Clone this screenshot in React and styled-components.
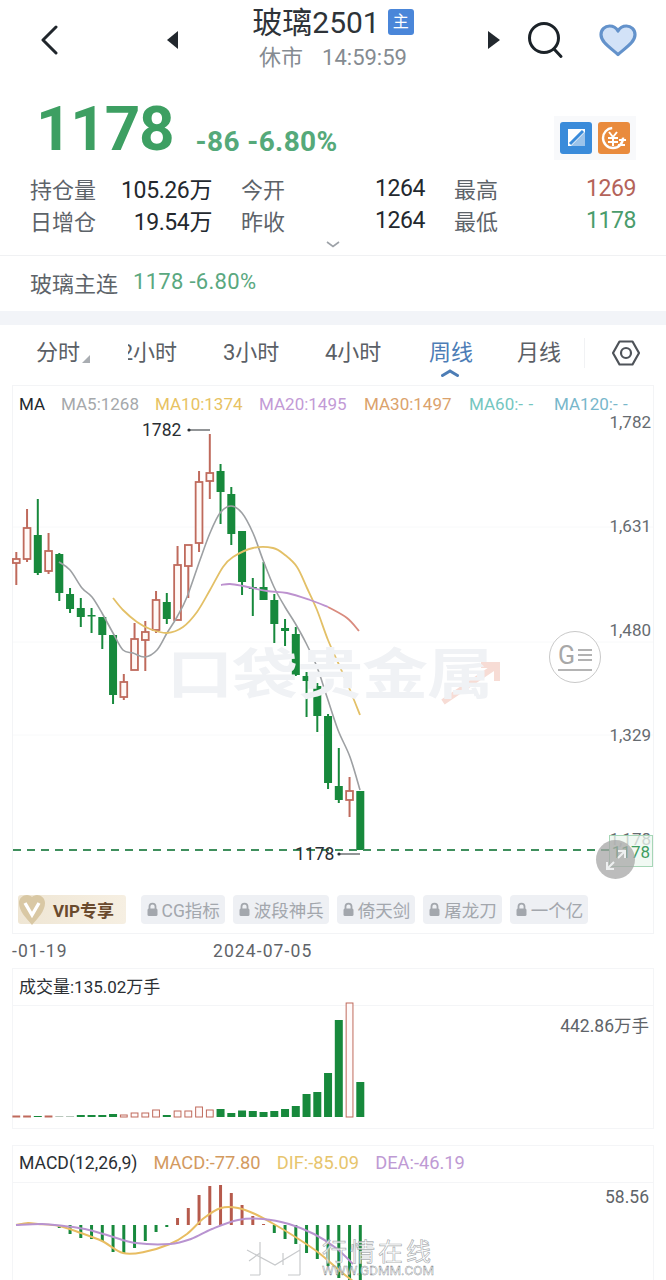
import styled, { createGlobalStyle } from "styled-components";

const GlobalStyle = createGlobalStyle`
  html, body { margin: 0; padding: 0; background: #fff; }
  body { font-family: Roboto, "Noto Sans CJK SC", sans-serif; }
  * { box-sizing: border-box; }
`;

const GREEN = "#17893c";
const RED = "#bf6a5c";

// [high, bodyTop, bodyBottom, low, up], all in page pixels
const candles = [
  [552, 559, 563, 585, 1], [509, 528, 559, 562, 1], [499, 535, 573, 575, 0], [533, 551, 571, 574, 1],
  [553, 554, 593, 601, 0], [588, 594, 609, 613, 0], [598, 608, 617, 627, 0], [608, 615, 616, 633, 0],
  [617, 617, 635, 649, 0], [635, 635, 695, 704, 0], [674, 682, 697, 700, 1], [623, 639, 670, 670, 1],
  [621, 632, 640, 671, 1], [591, 600, 630, 633, 1], [593, 602, 619, 624, 0], [546, 565, 620, 620, 1],
  [546, 545, 566, 598, 1], [471, 482, 543, 552, 1], [434, 473, 481, 499, 1], [464, 471, 492, 524, 0],
  [487, 494, 534, 545, 0], [531, 531, 582, 595, 0], [578, 587, 589, 616, 0], [562, 587, 600, 600, 0],
  [594, 600, 624, 643, 0], [619, 628, 631, 646, 0], [627, 634, 675, 676, 0], [672, 676, 681, 717, 0],
  [683, 686, 716, 732, 0], [714, 716, 783, 789, 0], [748, 786, 800, 803, 0], [777, 791, 800, 817, 1],
  [791, 791, 850, 850, 0],
];

const candleX = (i) => 16.3 + 10.75 * i;

const ma5 = [
  [59, 562], [70, 570], [82, 588], [92, 597], [102, 613], [113, 633], [123, 650], [133, 653], [145, 657],
  [157, 650], [167, 633], [177, 617], [187, 597], [200, 560], [210, 533], [220, 513], [231, 506], [242, 513],
  [253, 533], [263, 560], [274, 587], [285, 607], [295, 623], [306, 643], [317, 667], [327, 697], [338, 730],
  [350, 757], [360, 790],
];
const ma10 = [
  [113, 598], [123, 610], [137, 622], [150, 629], [167, 633], [183, 627], [197, 612], [210, 590], [223, 567],
  [233, 557], [253, 548], [273, 548], [285, 555], [297, 567], [307, 588], [317, 610], [328, 640], [340, 667],
  [350, 690], [360, 715],
];
const ma20 = [[221, 585], [230, 584], [243, 586], [267, 591], [287, 593], [310, 600], [328, 607]];
const ma30 = [[328, 607], [347, 618], [359, 631]];

const volumes = [
  [1, 1], [1, 1], [1, 0], [1, 1], [1, 2], [1, 2], [2, 0], [2, 0], [2, 0], [3, 0], [2, 1],
  [4, 1], [4, 1], [7, 1], [2, 0], [6, 1], [6, 1], [10, 1], [7, 1], [8, 0], [4, 0], [6.5, 0],
  [6, 0], [5, 0], [6, 0], [8, 0], [11, 0], [23, 0], [25, 0], [44, 0], [97, 0], [114, 1], [35, 0],
];

// histogram ends as page y, measured from the zero line at 1224
const macdBars = [
  null, null, null, null, 1227, 1233, 1237, 1238, 1240, 1251, 1252, 1247, 1240, 1231, 1226,
  1217, 1207, 1194, 1185, 1184, 1192, 1204, 1215, 1223, 1232, 1238, 1243, 1252, 1258, 1265, 1277, 1280, 1280,
];
const dif = [
  [16, 1224], [28, 1222], [38, 1223], [59, 1225], [81, 1232], [102, 1240], [123, 1252], [144, 1251], [170, 1243],
  [187, 1233], [204, 1217], [221, 1207], [238, 1207], [255, 1213], [272, 1222], [297, 1237], [319, 1252], [340, 1270], [353, 1280],
];
const dea = [
  [16, 1224], [42, 1223], [64, 1225], [85, 1228], [110, 1235], [136, 1242], [170, 1243], [191, 1238], [212, 1228],
  [238, 1219], [263, 1218], [289, 1223], [314, 1233], [336, 1247], [353, 1263],
];

// catmull-rom through the measured points, so the averages stay round
function smooth(points) {
  let d = `M${points[0][0]} ${points[0][1]}`;
  for (let i = 0; i < points.length - 1; i++) {
    const p0 = points[i - 1] || points[i];
    const p1 = points[i];
    const p2 = points[i + 1];
    const p3 = points[i + 2] || p2;
    const c1 = [p1[0] + (p2[0] - p0[0]) / 6, p1[1] + (p2[1] - p0[1]) / 6];
    const c2 = [p2[0] - (p3[0] - p1[0]) / 6, p2[1] - (p3[1] - p1[1]) / 6];
    d += ` C${c1[0]} ${c1[1]} ${c2[0]} ${c2[1]} ${p2[0]} ${p2[1]}`;
  }
  return d;
}

const Page = styled.div`
  position: relative;
  width: 666px;
  height: 1280px;
  overflow: hidden;
  background: #fff;
`;

const Header = styled.header`
  display: grid;
  grid-template-columns: 167px 11px 310px 12px 27px 72px 1fr;
  height: 90px;
  align-items: center;
`;

const BackCell = styled.div`
  padding: 0 0 10px 40px;
  display: flex;
`;

const Arrow = styled.svg`
  display: block;
  margin-bottom: 10px;
`;

const TitleBlock = styled.div`
  display: flex;
  flex-direction: column;
  align-items: center;
  margin-bottom: 18px;
`;

const TitleRow = styled.div`
  display: flex;
  align-items: flex-start;
  gap: 8px;
  height: 43px;
  padding-top: 4px;
`;

const Title = styled.div`
  font-size: 30px;
  line-height: 36px;
  color: #2e3338;
`;

const Badge = styled.span`
  width: 26px;
  height: 26px;
  margin-top: 4px;
  border-radius: 3px;
  background: #4a86d9;
  color: #fff;
  font-size: 16px;
  line-height: 26px;
  text-align: center;
`;

const Status = styled.div`
  display: flex;
  gap: 19px;
  font-size: 22px;
  line-height: 28px;
  color: #858b91;
`;

const IconCell = styled.div`
  display: flex;
  padding-bottom: 10px;
`;

const Quote = styled.section`
  display: flex;
  align-items: flex-end;
  height: 82px;
  padding: 0 30px 15px 36px;
`;

const BigPrice = styled.div`
  font-size: 62px;
  font-weight: 700;
  line-height: 56px;
  color: #3d9f62;
  letter-spacing: -1.2px;
`;

const Change = styled.div`
  margin-left: 22px;
  font-size: 28px;
  font-weight: 700;
  line-height: 30px;
  color: #55a97a;
  letter-spacing: 0.4px;
`;

const Tools = styled.div`
  margin-left: auto;
  display: flex;
  gap: 6px;
  padding: 6px 6px;
  margin-bottom: -3px;
  background: #f8f9fb;
`;

const Stats = styled.section`
  display: grid;
  grid-template-columns: 182px 184px 182px;
  column-gap: 29px;
  grid-auto-rows: 32px;
  padding: 0 30px;
`;

const Stat = styled.div`
  display: flex;
  justify-content: space-between;
  align-items: center;
`;

const StatLabel = styled.span`
  font-size: 22px;
  color: #5d6369;
`;

const StatValue = styled.span`
  font-size: 23px;
  letter-spacing: -0.4px;
  color: ${(p) => p.$color || "#23282e"};
`;

const Fold = styled.div`
  display: flex;
  justify-content: center;
  height: 20px;
  padding-top: 5px;
  border-bottom: 1px solid #f0f1f3;
`;

const SubRow = styled.div`
  display: flex;
  align-items: center;
  gap: 15px;
  height: 55px;
  padding: 0 0 4px 30px;
  font-size: 22px;
  color: #5d6369;
`;

const SubValue = styled.span`
  color: #5aa880;
  letter-spacing: 0.3px;
`;

const Band = styled.div`
  height: 14px;
  background: #f2f4f8;
`;

const Tabs = styled.nav`
  display: grid;
  grid-template-columns: 92px 95px 102px 104px 88px 67px 1fr;
  height: 60px;
  padding: 13px 0 0 36px;
`;

const Tab = styled.div`
  position: relative;
  display: flex;
  height: 30px;
  font-size: 22px;
  line-height: 30px;
  color: ${(p) => (p.$active ? "#4d7db6" : "#5b6066")};
`;

const ClippedDigit = styled.span`
  display: inline-block;
  width: 5px;
  overflow: hidden;
  direction: rtl;
`;

const TabMark = styled.svg`
  position: absolute;
  left: ${(p) => p.$left}px;
  top: ${(p) => p.$top}px;
`;

const SettingsCell = styled.div`
  display: flex;
  justify-content: flex-start;
  padding-left: 27px;
  border-left: 1px solid #f1f2f4;
  height: 30px;
`;

const ChartPanel = styled.section`
  position: relative;
  margin: 0 12px;
  height: 549px;
  border: 1px solid #f3f4f6;
`;

const Legend = styled.div`
  display: flex;
  align-items: center;
  height: 34px;
  padding: 2px 0 0 6px;
  font-size: 17px;
  white-space: nowrap;
`;

const LegendItem = styled.span`
  width: ${(p) => p.$width}px;
  color: ${(p) => p.$color};
`;

const Dashes = styled.span`
  letter-spacing: 5.5px;
`;

const ChartSvg = styled.svg`
  display: block;
  overflow: visible;
`;

const PriceScale = styled.div`
  position: absolute;
  top: 26px;
  right: 2px;
  display: flex;
  flex-direction: column;
  align-items: flex-end;
  gap: 84.2px;
  font-size: 17px;
  line-height: 20px;
  color: #666b70;
`;

const Watermark = styled.div`
  position: absolute;
  top: 252px;
  left: 154px;
  font-size: 66px;
  line-height: 76px;
  font-weight: 700;
  letter-spacing: -1px;
  white-space: nowrap;
  color: #f0f2f5;
  transform: scaleY(0.82);
`;

const GoldButton = styled.div`
  position: absolute;
  top: 245px;
  left: 536px;
  width: 52px;
  height: 52px;
  border: 1.5px solid #c9c9c9;
  border-radius: 50%;
  background: rgba(255, 255, 255, 0.85);
  display: flex;
  align-items: center;
  justify-content: center;
`;

const GoldMark = styled.div`
  display: flex;
  align-items: center;
  gap: 2px;
  height: 27px;
  border-bottom: 2px solid #b4b4b4;
  font-size: 25px;
  line-height: 24px;
  color: #a8a8a8;
`;

const LastTag = styled.div`
  position: absolute;
  top: 449px;
  right: 0;
  width: 44px;
  height: 32px;
  padding: 6px 2px 0 0;
  border: 1px solid #a6d6b6;
  background: rgba(236, 247, 239, 0.75);
  text-align: right;
  font-size: 17px;
  line-height: 20px;
  color: #3e9d60;
`;

const ZoomButton = styled.div`
  position: absolute;
  top: 454px;
  left: 583px;
  width: 39px;
  height: 39px;
  border-radius: 50%;
  background: rgba(165, 165, 165, 0.75);
  display: flex;
  align-items: center;
  justify-content: center;
`;

const IndicatorBar = styled.div`
  display: flex;
  align-items: center;
  gap: 8px;
  height: 43px;
  padding: 0 0 4px 5px;
`;

const VipChip = styled.div`
  display: flex;
  align-items: center;
  gap: 7px;
  width: 108px;
  height: 29px;
  margin-right: 6.5px;
  border-radius: 3px;
  background: linear-gradient(90deg, #efe6d4, #f6efe2);
  font-size: 17px;
  font-weight: 700;
  color: #6a4a2d;
`;

const LockChip = styled.div`
  display: flex;
  align-items: center;
  gap: 3px;
  height: 29px;
  padding: 0 5px;
  border-radius: 4px;
  background: #eef0f4;
  font-size: 17.5px;
  white-space: nowrap;
  color: #a3a7ad;
`;

const DateAxis = styled.div`
  display: grid;
  grid-template-columns: 201px 1fr;
  height: 34px;
  padding: 6px 0 0 12px;
  font-size: 17.5px;
  letter-spacing: 1.1px;
  line-height: 22px;
  color: #5f6469;
`;

const IndicatorPanel = styled.section`
  position: relative;
  margin: 0 12px ${(p) => p.$gap || 0}px;
  border: 1px solid #f4f5f7;
  border-bottom-width: ${(p) => (p.$open ? 0 : 1)}px;
`;

const PanelHead = styled.div`
  display: flex;
  align-items: center;
  gap: 16px;
  height: 37px;
  padding: 0 0 3px 6px;
  border-bottom: 1px solid #f4f5f7;
  font-size: 17px;
  white-space: nowrap;
  color: #2b2f34;
`;

const MacdName = styled.span`
  font-size: 17.6px;
`;

const HeadValue = styled.span`
  font-size: 18.3px;
  color: ${(p) => p.$color};
`;

const MaxLabel = styled.div`
  position: absolute;
  right: 4px;
  top: ${(p) => p.$top}px;
  font-size: 17.5px;
  line-height: 20px;
  color: #5f6469;
`;

const SiteMark = styled.div`
  position: absolute;
  left: 236px;
  top: 1241px;
  display: flex;
  pointer-events: none;
`;

const SiteText = styled.div`
  margin-left: 6px;
  display: flex;
  flex-direction: column;
  color: rgba(255, 255, 255, 0.75);
`;

const SiteName = styled.div`
  height: 23px;
  font-size: 25px;
  line-height: 23px;
  letter-spacing: 3px;
  -webkit-text-stroke: 0.7px rgba(150, 155, 160, 0.8);
`;

const SiteUrl = styled.div`
  font-size: 13.3px;
  line-height: 14px;
  white-space: nowrap;
  -webkit-text-stroke: 0.5px rgba(130, 135, 140, 0.9);
`;

function Candle({ data, index }) {
  const [high, top, bottom, low, up] = data;
  const x = candleX(index);
  const color = up ? RED : GREEN;
  return (
    <g>
      <line x1={x} x2={x} y1={high} y2={low} stroke={color} strokeWidth="2" />
      {up ? (
        <rect x={x - 3.4} y={top} width="6.8" height={Math.max(bottom - top, 1)} fill="#fff9f7" stroke={color} strokeWidth="1.8" />
      ) : (
        <rect x={x - 4} y={top} width="8" height={Math.max(bottom - top, 1.5)} fill={color} />
      )}
    </g>
  );
}

function LockIcon() {
  return (
    <svg width="13" height="15" viewBox="0 0 13 15">
      <path d="M3.5 7V4.6a3 3 0 0 1 6 0V7" fill="none" stroke="#a3a7ad" strokeWidth="1.8" />
      <rect x="1.5" y="6.5" width="10" height="7.5" rx="1.5" fill="#a3a7ad" />
    </svg>
  );
}

const locked = ["CG指标", "波段神兵", "倚天剑", "屠龙刀", "一个亿"];

export default function App() {
  return (
    <Page>
      <GlobalStyle />
      <Header>
        <BackCell>
          <svg width="18" height="30" viewBox="0 0 18 30">
            <path d="M16 2 L3 15 L16 28" fill="none" stroke="#20262c" strokeWidth="3" strokeLinecap="round" strokeLinejoin="round" />
          </svg>
        </BackCell>
        <Arrow width="11" height="18" viewBox="0 0 11 18">
          <path d="M11 0V18L0 9Z" fill="#22282e" />
        </Arrow>
        <TitleBlock>
          <TitleRow>
            <Title>玻璃2501</Title>
            <Badge>主</Badge>
          </TitleRow>
          <Status>
            <span>休市</span>
            <span>14:59:59</span>
          </Status>
        </TitleBlock>
        <Arrow width="12" height="18" viewBox="0 0 12 18">
          <path d="M0 0V18L12 9Z" fill="#22282e" />
        </Arrow>
        <span />
        <IconCell>
          <svg width="37" height="38" viewBox="0 0 37 38">
            <circle cx="17" cy="17" r="14.5" fill="none" stroke="#1b2228" strokeWidth="3" />
            <path d="M27 28 L34 35.5" stroke="#1b2228" strokeWidth="3" strokeLinecap="round" />
          </svg>
        </IconCell>
        <IconCell>
          <svg width="38" height="33" viewBox="0 0 38 33">
            <path
              d="M19 30.5 C11 23.5 2 18 2 10.8 C2 5.6 6 2 10.6 2 C14 2 17.2 3.8 19 7 C20.8 3.8 24 2 27.4 2 C32 2 36 5.6 36 10.8 C36 18 27 23.5 19 30.5Z"
              fill="#d2e2f7"
              stroke="#6392cb"
              strokeWidth="3.2"
              strokeLinejoin="round"
            />
          </svg>
        </IconCell>
      </Header>

      <Quote>
        <BigPrice>1178</BigPrice>
        <Change>-86 -6.80%</Change>
        <Tools>
          <svg width="32" height="32" viewBox="0 0 32 32">
            <rect width="32" height="32" rx="3" fill="#3a8bda" />
            <path d="M8 7H25V24H8Z" fill="#fff" />
            <path d="M11 24 L25 10 V24Z" fill="#9cc3ea" />
            <path d="M10 22 L23 9" stroke="#3a8bda" strokeWidth="3" />
          </svg>
          <svg width="32" height="32" viewBox="0 0 32 32">
            <rect width="32" height="32" rx="3" fill="#e98b3d" />
            <circle cx="15" cy="16" r="10" fill="none" stroke="#fff" strokeWidth="2.4" strokeDasharray="46 16" />
            <path d="M11 10 L15 15 L19 10 M10 16H20 M10 20H20 M15 15V24" fill="none" stroke="#fff" strokeWidth="2" />
            <path d="M21 18H28 M20 23H27" stroke="#fff" strokeWidth="2" />
          </svg>
        </Tools>
      </Quote>

      <Stats>
        <Stat>
          <StatLabel>持仓量</StatLabel>
          <StatValue>105.26万</StatValue>
        </Stat>
        <Stat>
          <StatLabel>今开</StatLabel>
          <StatValue>1264</StatValue>
        </Stat>
        <Stat>
          <StatLabel>最高</StatLabel>
          <StatValue $color="#b4635a">1269</StatValue>
        </Stat>
        <Stat>
          <StatLabel>日增仓</StatLabel>
          <StatValue>19.54万</StatValue>
        </Stat>
        <Stat>
          <StatLabel>昨收</StatLabel>
          <StatValue>1264</StatValue>
        </Stat>
        <Stat>
          <StatLabel>最低</StatLabel>
          <StatValue $color="#4a9c6c">1178</StatValue>
        </Stat>
      </Stats>

      <Fold>
        <svg width="14" height="7" viewBox="0 0 14 7">
          <path d="M1 1 L7 5.5 L13 1" fill="none" stroke="#9da2a8" strokeWidth="1.6" />
        </svg>
      </Fold>

      <SubRow>
        <span>玻璃主连</span>
        <SubValue>1178 -6.80%</SubValue>
      </SubRow>
      <Band />

      <Tabs>
        <Tab>
          分时
          <TabMark $left={46} $top={17} width="8" height="8" viewBox="0 0 8 8">
            <path d="M8 0V8H0Z" fill="#a9adb2" />
          </TabMark>
        </Tab>
        <Tab>
          <ClippedDigit>2</ClippedDigit>小时
        </Tab>
        <Tab>3小时</Tab>
        <Tab>4小时</Tab>
        <Tab $active>
          周线
          <TabMark $left={12} $top={31} width="18" height="8" viewBox="0 0 18 8">
            <path d="M1.5 6.5 L9 2 L16.5 6.5" fill="none" stroke="#4d7db6" strokeWidth="3" strokeLinecap="round" />
          </TabMark>
        </Tab>
        <Tab>月线</Tab>
        <SettingsCell>
          <svg width="28" height="30" viewBox="0 0 28 30">
            <path d="M7.5 3.5H20.5L27 15L20.5 26.5H7.5L1 15Z" fill="none" stroke="#4e5359" strokeWidth="2.2" strokeLinejoin="round" />
            <circle cx="14" cy="15" r="5" fill="none" stroke="#4e5359" strokeWidth="2.2" />
          </svg>
        </SettingsCell>
      </Tabs>

      <ChartPanel>
        <Legend>
          <LegendItem $width={42} $color="#23282e">MA</LegendItem>
          <LegendItem $width={94} $color="#a5a8ab">MA5:1268</LegendItem>
          <LegendItem $width={104} $color="#e7c262">MA10:1374</LegendItem>
          <LegendItem $width={105} $color="#c29ad6">MA20:1495</LegendItem>
          <LegendItem $width={105} $color="#dba26c">MA30:1497</LegendItem>
          <LegendItem $width={85} $color="#74c6bf">
            MA60:<Dashes>--</Dashes>
          </LegendItem>
          <LegendItem $width={80} $color="#78b7cb">
            MA120:<Dashes>--</Dashes>
          </LegendItem>
        </Legend>

        <Watermark>口袋贵金属</Watermark>
        <ChartSvg width="640" height="470" viewBox="13 420 640 470">
          {[527, 642, 735].map((y) => (
            <line key={y} x1="13" x2="653" y1={y} y2={y} stroke="#f8f9fa" />
          ))}
          <path d="M443 702 L496 666 M481 665H497V681" fill="none" stroke="#f7dcd5" strokeWidth="6" />
          {candles.map((c, i) => (
            <Candle key={i} data={c} index={i} />
          ))}
          <path d={smooth(ma5)} fill="none" stroke="#9da0a3" strokeWidth="1.6" />
          <path d={smooth(ma10)} fill="none" stroke="#e3c067" strokeWidth="1.8" />
          <path d={smooth(ma20)} fill="none" stroke="#bd92cf" strokeWidth="1.8" />
          <path d={smooth(ma30)} fill="none" stroke="#d98b7e" strokeWidth="1.8" />
          <text x="142" y="436" fontSize="17.5" fill="#2a2e33">1782</text>
          <circle cx="189" cy="430" r="1.6" fill="#2a2e33" />
          <line x1="190" x2="210" y1="430" y2="430" stroke="#3a3e43" strokeWidth="1.1" />
          <line x1="13" x2="610" y1="850" y2="850" stroke="#3f8f5d" strokeWidth="1.8" strokeDasharray="8 6" />
          <text x="295" y="860" fontSize="17.5" fill="#2a2e33">1178</text>
          <circle cx="339" cy="854" r="1.6" fill="#2a2e33" />
          <line x1="340" x2="360" y1="854" y2="854" stroke="#3a3e43" strokeWidth="1.1" />
        </ChartSvg>

        <PriceScale>
          <span>1,782</span>
          <span>1,631</span>
          <span>1,480</span>
          <span>1,329</span>
          <span>1,178</span>
        </PriceScale>

        <GoldButton>
          <GoldMark>
            G
            <svg width="15" height="18" viewBox="0 0 15 18">
              <path d="M1 3H15 M1 8H15 M1 13H15" stroke="#b2b2b2" strokeWidth="1.8" />
            </svg>
          </GoldMark>
        </GoldButton>

        <LastTag>1178</LastTag>
        <ZoomButton>
          <svg width="24" height="24" viewBox="0 0 24 24">
            <path d="M3 21 L10 14 M3 14V21H10 M21 3 L14 10 M14 3H21V10" fill="none" stroke="#eef0f0" strokeWidth="2" />
          </svg>
        </ZoomButton>

        <IndicatorBar>
          <VipChip>
            <svg width="28" height="34" viewBox="0 0 28 34">
              <path d="M14 32 C8 25 1 18 1 10 C1 5 5 2 9 2 C11 2 13 3 14 4 C15 3 17 2 19 2 C23 2 27 5 27 10 C27 18 20 25 14 32Z" fill="#d9c8a4" />
              <path d="M7 10 L14 22 L21 10" fill="none" stroke="#fff" strokeWidth="3.4" />
            </svg>
            VIP专享
          </VipChip>
          {locked.map((name) => (
            <LockChip key={name}>
              <LockIcon />
              {name}
            </LockChip>
          ))}
        </IndicatorBar>
      </ChartPanel>

      <DateAxis>
        <span>-01-19</span>
        <span>2024-07-05</span>
      </DateAxis>

      <IndicatorPanel $gap={16}>
        <PanelHead>成交量:135.02万手</PanelHead>
        <ChartSvg width="640" height="122" viewBox="13 1006 640 122">
          {volumes.map(([h, kind], i) =>
            kind === 1 ? (
              <rect key={i} x={candleX(i) - 3.4} y={1117 - h} width="6.8" height={h} fill="#fffafa" stroke={RED} strokeWidth="1" />
            ) : (
              <rect key={i} x={candleX(i) - 4} y={1117 - h} width="8" height={h} fill={kind === 2 ? "#b9c8bd" : GREEN} />
            )
          )}
        </ChartSvg>
        <MaxLabel $top={47}>442.86万手</MaxLabel>
      </IndicatorPanel>

      <IndicatorPanel $open>
        <PanelHead>
          <MacdName>MACD(12,26,9)</MacdName>
          <HeadValue $color="#d39a5f">MACD:-77.80</HeadValue>
          <HeadValue $color="#e7c56d">DIF:-85.09</HeadValue>
          <HeadValue $color="#be9ad4">DEA:-46.19</HeadValue>
        </PanelHead>
        <ChartSvg width="640" height="98" viewBox="13 1182 640 98">
          {macdBars.map((end, i) =>
            end === null ? null : (
              <line
                key={i}
                x1={candleX(i)}
                x2={candleX(i)}
                y1="1224"
                y2={end}
                stroke={end < 1224 ? "#b65a4c" : GREEN}
                strokeWidth="3"
              />
            )
          )}
          <path d={smooth(dif)} fill="none" stroke="#e8bd62" strokeWidth="2" />
          <path d={smooth(dea)} fill="none" stroke="#b893d0" strokeWidth="2" />
        </ChartSvg>
        <MaxLabel $top={41}>58.56</MaxLabel>
      </IndicatorPanel>

      <SiteMark>
        <svg width="80" height="38" viewBox="0 0 80 38">
          <path
            d="M24 1V34 M11 9 L39 24 L64 9 M13 20 L24 12 M64 3V34 M24 34H14 M64 34H52 M47 12V24"
            fill="none"
            stroke="#c8cacc"
            strokeWidth="1.2"
          />
        </svg>
        <SiteText>
          <SiteName>行情在线</SiteName>
          <SiteUrl>WWW.GDMM.COM</SiteUrl>
        </SiteText>
      </SiteMark>
    </Page>
  );
}
